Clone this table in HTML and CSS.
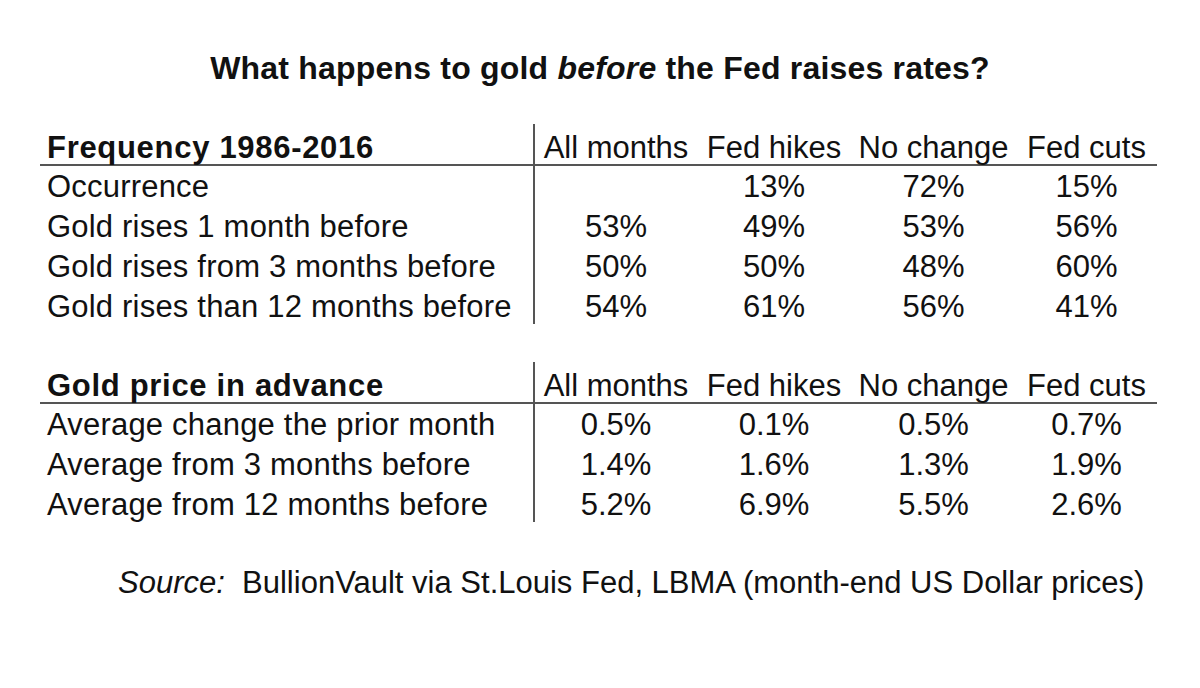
FILE: index.html
```html
<!DOCTYPE html>
<html>
<head>
<meta charset="utf-8">
<link rel="stylesheet" href="styles.css">
</head>
<body>
<div class="page">
  <h1 class="title">What happens to gold <em>before</em> the Fed raises rates?</h1>

  <div class="grid first">
    <div class="cell label head">Frequency 1986-2016</div>
    <div class="cell val head sep">All months</div>
    <div class="cell val head">Fed hikes</div>
    <div class="cell val head">No change</div>
    <div class="cell val head">Fed cuts</div>

    <div class="cell label">Occurrence</div>
    <div class="cell val sep"></div>
    <div class="cell val">13%</div>
    <div class="cell val">72%</div>
    <div class="cell val">15%</div>

    <div class="cell label">Gold rises 1 month before</div>
    <div class="cell val sep">53%</div>
    <div class="cell val">49%</div>
    <div class="cell val">53%</div>
    <div class="cell val">56%</div>

    <div class="cell label">Gold rises from 3 months before</div>
    <div class="cell val sep">50%</div>
    <div class="cell val">50%</div>
    <div class="cell val">48%</div>
    <div class="cell val">60%</div>

    <div class="cell label">Gold rises than 12 months before</div>
    <div class="cell val sep">54%</div>
    <div class="cell val">61%</div>
    <div class="cell val">56%</div>
    <div class="cell val">41%</div>
  </div>

  <div class="grid second">
    <div class="cell label head">Gold price in advance</div>
    <div class="cell val head sep">All months</div>
    <div class="cell val head">Fed hikes</div>
    <div class="cell val head">No change</div>
    <div class="cell val head">Fed cuts</div>

    <div class="cell label">Average change the prior month</div>
    <div class="cell val sep">0.5%</div>
    <div class="cell val">0.1%</div>
    <div class="cell val">0.5%</div>
    <div class="cell val">0.7%</div>

    <div class="cell label">Average from 3 months before</div>
    <div class="cell val sep">1.4%</div>
    <div class="cell val">1.6%</div>
    <div class="cell val">1.3%</div>
    <div class="cell val">1.9%</div>

    <div class="cell label">Average from 12 months before</div>
    <div class="cell val sep">5.2%</div>
    <div class="cell val">6.9%</div>
    <div class="cell val">5.5%</div>
    <div class="cell val">2.6%</div>
  </div>

  <p class="source"><em>Source:</em>&nbsp; BullionVault via St.Louis Fed, LBMA (month-end US Dollar prices)</p>
</div>
</body>
</html>
```

FILE: styles.css
```css
html, body {
  margin: 0;
  padding: 0;
  background: #ffffff;
}

body {
  width: 1200px;
  height: 688px;
  overflow: hidden;
  font-family: "Liberation Sans", Arial, sans-serif;
  color: #111111;
}

.page {
  padding: 49px 0 0 40px;
}

.title {
  margin: 0;
  width: 1120px;
  text-align: center;
  font-size: 32px;
  font-weight: bold;
  line-height: 38px;
  letter-spacing: 0.2px;
}

.title em {
  font-style: italic;
}

.grid {
  display: grid;
  grid-template-columns: 495px 162px 154px 165px 141px;
  grid-auto-rows: 40px;
  width: 1117px;
  font-size: 31px;
}

.first {
  margin-top: 37px;
}

.second {
  margin-top: 38px;
}

.cell {
  display: flex;
  align-items: center;
  white-space: nowrap;
  box-sizing: border-box;
  padding-top: 6px;
}

.label {
  padding-left: 7px;
  letter-spacing: 0.2px;
}

.val {
  justify-content: center;
}

.head {
  font-weight: normal;
  border-bottom: 2px solid #555555;
  height: 42px;
  padding-top: 7px;
}

.label.head {
  font-weight: bold;
  letter-spacing: 0.7px;
}

.sep {
  border-left: 2px solid #555555;
  margin-left: -2px;
}

.source {
  margin: 41px 0 0 78px;
  font-size: 31px;
  line-height: 40px;
}
```
